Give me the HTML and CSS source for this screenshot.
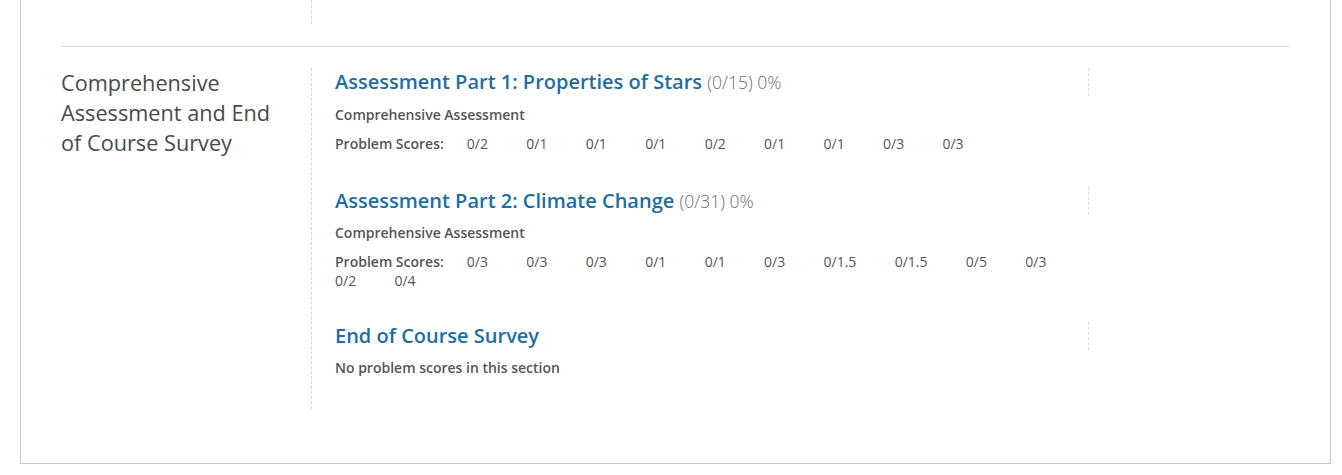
FILE: index.html
```html
<!DOCTYPE html>
<html lang="en">
<head>
<meta charset="utf-8">
<title>Progress</title>
<link rel="stylesheet" href="styles.css">
</head>
<body>
<div class="card">
  <section class="chapter chapter-prev">
    <div class="chapter-title"></div>
    <div class="sections sections-prev"></div>
  </section>
  <section class="chapter">
    <h2 class="chapter-title">Comprehensive Assessment and End of Course Survey</h2>
    <div class="sections">
      <div class="sec">
        <h3 class="sec-title"><a class="sec-link" href="#">Assessment Part 1: Properties of Stars</a> <span class="sec-score">(0/15) 0%</span></h3>
        <p class="sub">Comprehensive Assessment</p>
        <dl class="scores">
          <dt>Problem Scores:</dt>
          <dd>0/2</dd><dd>0/1</dd><dd>0/1</dd><dd>0/1</dd><dd>0/2</dd><dd>0/1</dd><dd>0/1</dd><dd>0/3</dd><dd>0/3</dd>
        </dl>
      </div>
      <div class="sec">
        <h3 class="sec-title"><a class="sec-link" href="#">Assessment Part 2: Climate Change</a> <span class="sec-score">(0/31) 0%</span></h3>
        <p class="sub">Comprehensive Assessment</p>
        <dl class="scores">
          <dt>Problem Scores:</dt>
          <dd>0/3</dd><dd>0/3</dd><dd>0/3</dd><dd>0/1</dd><dd>0/1</dd><dd>0/3</dd><dd>0/1.5</dd><dd>0/1.5</dd><dd>0/5</dd><dd>0/3</dd><dd>0/2</dd><dd>0/4</dd>
        </dl>
      </div>
      <div class="sec sec-empty">
        <h3 class="sec-title"><a class="sec-link" href="#">End of Course Survey</a></h3>
        <p class="sub">No problem scores in this section</p>
      </div>
    </div>
  </section>
</div>
</body>
</html>
```
FILE: styles.css
```css
html, body {
  margin: 0;
  padding: 0;
  background: #ffffff;
}
body {
  font-family: "Open Sans", "Liberation Sans", sans-serif;
  color: #555555;
}
.card {
  width: 1229px;
  margin: 0 0 0 20px;
  padding: 0 40px 54px 40px;
  border: 1px solid #c8c8c8;
  border-top: none;
}
.chapter {
  display: flex;
  align-items: stretch;
}
.chapter + .chapter {
  border-top: 1px solid #dddddd;
  padding-top: 21px;
}
.chapter-prev {
  height: 24px;
  margin-bottom: 22px;
}
.chapter-title {
  flex: 0 0 230px;
  margin: 0;
  padding-right: 20px;
  font-size: 21.7px;
  line-height: 30px;
  font-weight: 400;
  color: #4a4a4a;
}
.sections {
  flex: 0 0 754px;
  border-left: 1px dashed #d4d4d4;
  padding: 0 0 30.5px 23px;
}
.sections-prev {
  padding: 0;
}
.sec + .sec {
  margin-top: 34px;
}
.sec + .sec-empty {
  margin-top: 32px;
}
.sec-title {
  margin: 0;
  height: 28px;
  font-size: 20px;
  line-height: 28px;
  font-weight: 600;
  border-right: 1px dashed #e0e0e0;
}
.sec-link {
  color: #1c6ea4;
  text-decoration: none;
}
.sec-score {
  font-size: 17.5px;
  line-height: 20px;
  font-weight: 300;
  color: #6e6e6e;
}
.sub {
  margin: 8.5px 0 0 0;
  font-size: 14px;
  line-height: 20px;
  font-weight: 600;
  color: #555555;
}
.sec-empty .sub {
  margin-top: 8px;
}
.scores {
  display: flex;
  flex-wrap: wrap;
  margin: 9px 0 0 0;
  font-size: 14px;
  line-height: 19px;
  color: #555555;
}
.scores dt {
  font-weight: 600;
  margin-right: 23px;
}
.scores dd {
  margin: 0 38.3px 0 0;
  font-weight: 400;
}
```
